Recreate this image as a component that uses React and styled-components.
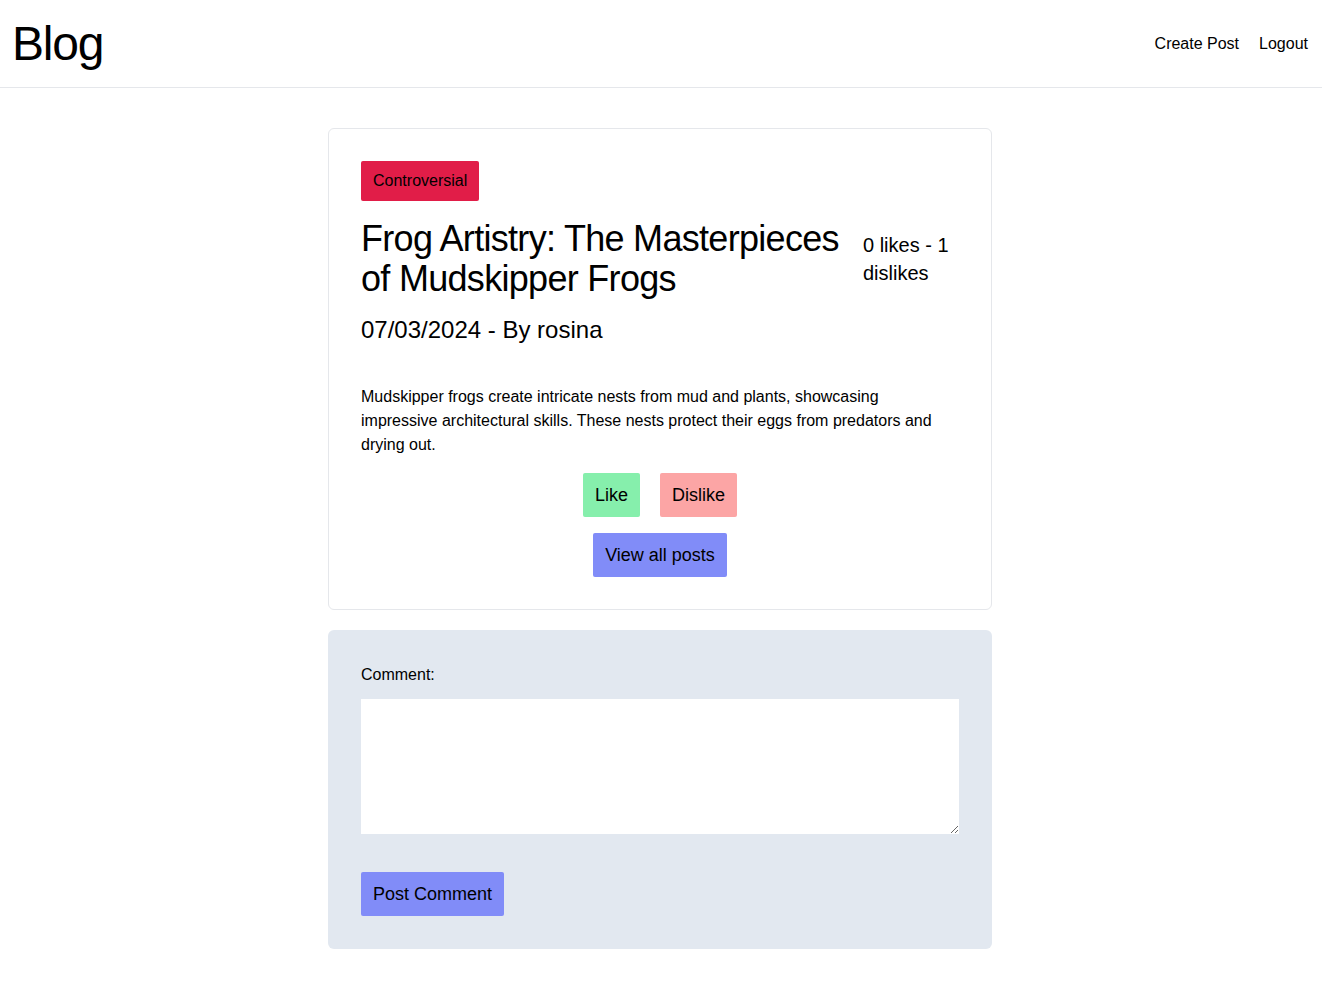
import React from "react";
import styled, { createGlobalStyle } from "styled-components";

const GlobalStyle = createGlobalStyle`
  * {
    box-sizing: border-box;
  }
  body {
    margin: 0;
    background: #ffffff;
    color: #000000;
    font-family: "Liberation Sans", Arial, sans-serif;
  }
`;

const Header = styled.header`
  height: 88px;
  display: flex;
  align-items: center;
  justify-content: space-between;
  padding: 0 14px 0 12px;
  border-bottom: 1px solid #e5e7eb;
`;

const Logo = styled.h1`
  margin: 0;
  font-size: 48px;
  line-height: 48px;
  font-weight: 400;
  letter-spacing: -1.2px;
`;

const Nav = styled.nav`
  display: flex;
  gap: 20px;
`;

const NavLink = styled.a`
  font-size: 16px;
  line-height: 24px;
  color: #000000;
  text-decoration: none;
  cursor: pointer;
`;

const Main = styled.main`
  width: 664px;
  margin: 40px 0 0 calc(50% - 333px);
  display: flex;
  flex-direction: column;
  gap: 20px;
`;

const Card = styled.article`
  border: 1px solid #e5e7eb;
  border-radius: 6px;
  padding: 32px;
  display: flex;
  flex-direction: column;
`;

const Badge = styled.span`
  align-self: flex-start;
  background: #e11d48;
  border-radius: 2px;
  padding: 8px 12px;
  font-size: 16px;
  line-height: 24px;
`;

const TitleRow = styled.div`
  display: flex;
  align-items: center;
  gap: 20px;
  margin-top: 18px;
`;

const Title = styled.h2`
  flex: 1;
  margin: 0;
  font-size: 36px;
  line-height: 40px;
  font-weight: 400;
  letter-spacing: -0.7px;
`;

const Votes = styled.div`
  width: 96px;
  font-size: 20px;
  line-height: 28px;
`;

const Meta = styled.h3`
  margin: 15px 0 0;
  font-size: 24px;
  line-height: 32px;
  font-weight: 400;
`;

const Body = styled.p`
  margin: 39px 0 0;
  font-size: 16px;
  line-height: 24px;
`;

const ButtonRow = styled.div`
  display: flex;
  justify-content: center;
  gap: 20px;
  margin-top: 16px;
`;

const Button = styled.button`
  border: none;
  border-radius: 2px;
  background: ${(p) => p.bg};
  color: #000000;
  font-family: inherit;
  font-size: 18px;
  line-height: 28px;
  padding: 8px 12px;
  cursor: pointer;
`;

const CommentBox = styled.form`
  background: #e2e8f0;
  border-radius: 6px;
  padding: 33px;
  display: flex;
  flex-direction: column;
`;

const Label = styled.label`
  font-size: 16px;
  line-height: 24px;
`;

const TextArea = styled.textarea`
  margin-top: 12px;
  height: 135px;
  border: none;
  background: #ffffff;
  font-family: inherit;
  font-size: 16px;
  padding: 8px;
  outline: none;
`;

const SubmitRow = styled.div`
  margin-top: 38px;
  display: flex;
`;

const App = () => {
  return (
    <>
      <GlobalStyle />
      <Header>
        <Logo>Blog</Logo>
        <Nav>
          <NavLink>Create Post</NavLink>
          <NavLink>Logout</NavLink>
        </Nav>
      </Header>
      <Main>
        <Card>
          <Badge>Controversial</Badge>
          <TitleRow>
            <Title>Frog Artistry: The Masterpieces of Mudskipper Frogs</Title>
            <Votes>0 likes - 1 dislikes</Votes>
          </TitleRow>
          <Meta>07/03/2024 - By rosina</Meta>
          <Body>
            Mudskipper frogs create intricate nests from mud and plants,
            showcasing impressive architectural skills. These nests protect
            their eggs from predators and drying out.
          </Body>
          <ButtonRow>
            <Button bg="#86efac">Like</Button>
            <Button bg="#fca5a5">Dislike</Button>
          </ButtonRow>
          <ButtonRow>
            <Button bg="#818cf8">View all posts</Button>
          </ButtonRow>
        </Card>
        <CommentBox onSubmit={(e) => e.preventDefault()}>
          <Label>Comment:</Label>
          <TextArea />
          <SubmitRow>
            <Button bg="#818cf8">Post Comment</Button>
          </SubmitRow>
        </CommentBox>
      </Main>
    </>
  );
};

export default App;
